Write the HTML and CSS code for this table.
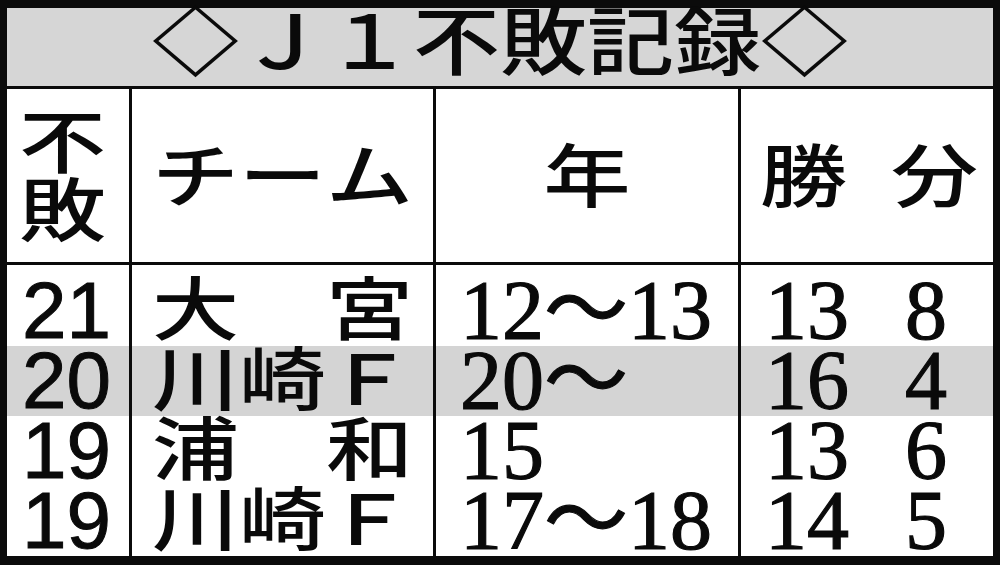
FILE: index.html
```html
<!DOCTYPE html>
<html lang="ja">
<head>
<meta charset="utf-8">
<title>Ｊ１不敗記録</title>
<link rel="stylesheet" href="styles.css">
</head>
<body>
<div class="frame">
  <div class="title"><span class="sq-t"><span class="dia">◇</span>Ｊ１不敗記録<span class="dia">◇</span></span></div>
  <div class="grid hdr">
    <div class="c c1"><span class="sq jp vert">不<br>敗</span></div>
    <div class="c c2"><div class="name jp"><span class="sq">チ</span><span class="sq">ー</span><span class="sq">ム</span></div></div>
    <div class="c c3 center"><span class="sq jp">年</span></div>
    <div class="c c4 wd jp"><span class="sq">勝</span><span class="sq">分</span></div>
  </div>
  <div class="rows">
    <div class="grid row first">
      <div class="c c1"><span class="no">21</span></div>
      <div class="c c2"><div class="name jp"><span class="sq">大</span><span class="sq">宮</span></div></div>
      <div class="c c3"><span class="yr">12〜13</span></div>
      <div class="c c4"><span class="num w">13</span><span class="num d">8</span></div>
    </div>
    <div class="grid row hl">
      <div class="c c1"><span class="no">20</span></div>
      <div class="c c2"><div class="name jp"><span class="sq">川</span><span class="sq">崎</span><span class="sq">Ｆ</span></div></div>
      <div class="c c3"><span class="yr">20〜</span></div>
      <div class="c c4"><span class="num w">16</span><span class="num d">4</span></div>
    </div>
    <div class="grid row">
      <div class="c c1"><span class="no">19</span></div>
      <div class="c c2"><div class="name jp"><span class="sq">浦</span><span class="sq">和</span></div></div>
      <div class="c c3"><span class="yr">15</span></div>
      <div class="c c4"><span class="num w">13</span><span class="num d">6</span></div>
    </div>
    <div class="grid row">
      <div class="c c1"><span class="no">19</span></div>
      <div class="c c2"><div class="name jp"><span class="sq">川</span><span class="sq">崎</span><span class="sq">Ｆ</span></div></div>
      <div class="c c3"><span class="yr">17〜18</span></div>
      <div class="c c4"><span class="num w">14</span><span class="num d">5</span></div>
    </div>
  </div>
</div>
</body>
</html>
```

FILE: styles.css
```css
html, body {
  margin: 0;
  padding: 0;
  background: #0b0b0b;
}

.frame {
  width: 1000px;
  height: 565px;
  box-sizing: border-box;
  padding: 8px 7px 9px 7px;
  background: #0b0b0b;
  color: #0a0a0a;
  overflow: hidden;
}

.title {
  height: 78px;
  background: #d6d6d6;
  margin-bottom: 3px;
  display: flex;
  align-items: center;
  justify-content: center;
  font-family: "Noto Sans CJK JP", sans-serif;
  font-size: 87px;
  font-weight: 500;
  line-height: 78px;
}

.sq-t {
  display: inline-block;
  transform: translateY(-10px) scaleY(0.85);
  white-space: nowrap;
}

.dia {
  font-weight: 700;
}

.jp {
  font-family: "Noto Sans CJK JP", sans-serif;
  font-size: 87px;
  font-weight: 500;
  line-height: 1;
}

.sq {
  display: inline-block;
  transform: translateY(-7px) scaleY(0.8);
}

.hdr .sq {
  transform: translateY(-4px) scaleY(0.8);
}

.grid {
  display: grid;
  grid-template-columns: 122px 301px 302px 252px;
  column-gap: 3px;
  background: #0b0b0b;
}

.hdr {
  height: 173px;
  grid-template-rows: 173px;
  margin-bottom: 3px;
}

.c {
  background: #fff;
  display: flex;
  align-items: center;
  box-sizing: border-box;
  min-height: 0;
}

.center {
  justify-content: center;
}

.vert {
  line-height: 85px;
  text-align: center;
}

.hdr .c1 {
  padding-left: 12px;
}

.name {
  display: flex;
  justify-content: space-between;
  width: 261px;
  margin-left: 20px;
}

.wd {
  padding-left: 19px;
  gap: 44px;
}

.row {
  height: 70px;
  grid-template-rows: 70px;
}

.row.first {
  height: 81px;
  grid-template-rows: 81px;
}

.row.first .c {
  padding-top: 11px;
}

.row.hl .c {
  background: #d4d4d4;
}

.no {
  font-family: "Liberation Sans", Arial, sans-serif;
  font-size: 80px;
  line-height: 1;
  padding-left: 15px;
  -webkit-text-stroke: 1px #0a0a0a;
}

.yr {
  font-family: "Liberation Serif", "Noto Sans CJK JP", serif;
  font-size: 84px;
  line-height: 1;
  padding-left: 24px;
  white-space: nowrap;
  -webkit-text-stroke: 1.2px #0a0a0a;
}

.num {
  font-family: "Liberation Serif", serif;
  font-size: 84px;
  line-height: 1;
  -webkit-text-stroke: 1.2px #0a0a0a;
}

.num.w {
  width: 84px;
  margin-left: 24px;
}

.num.d {
  margin-left: 56px;
}
```
